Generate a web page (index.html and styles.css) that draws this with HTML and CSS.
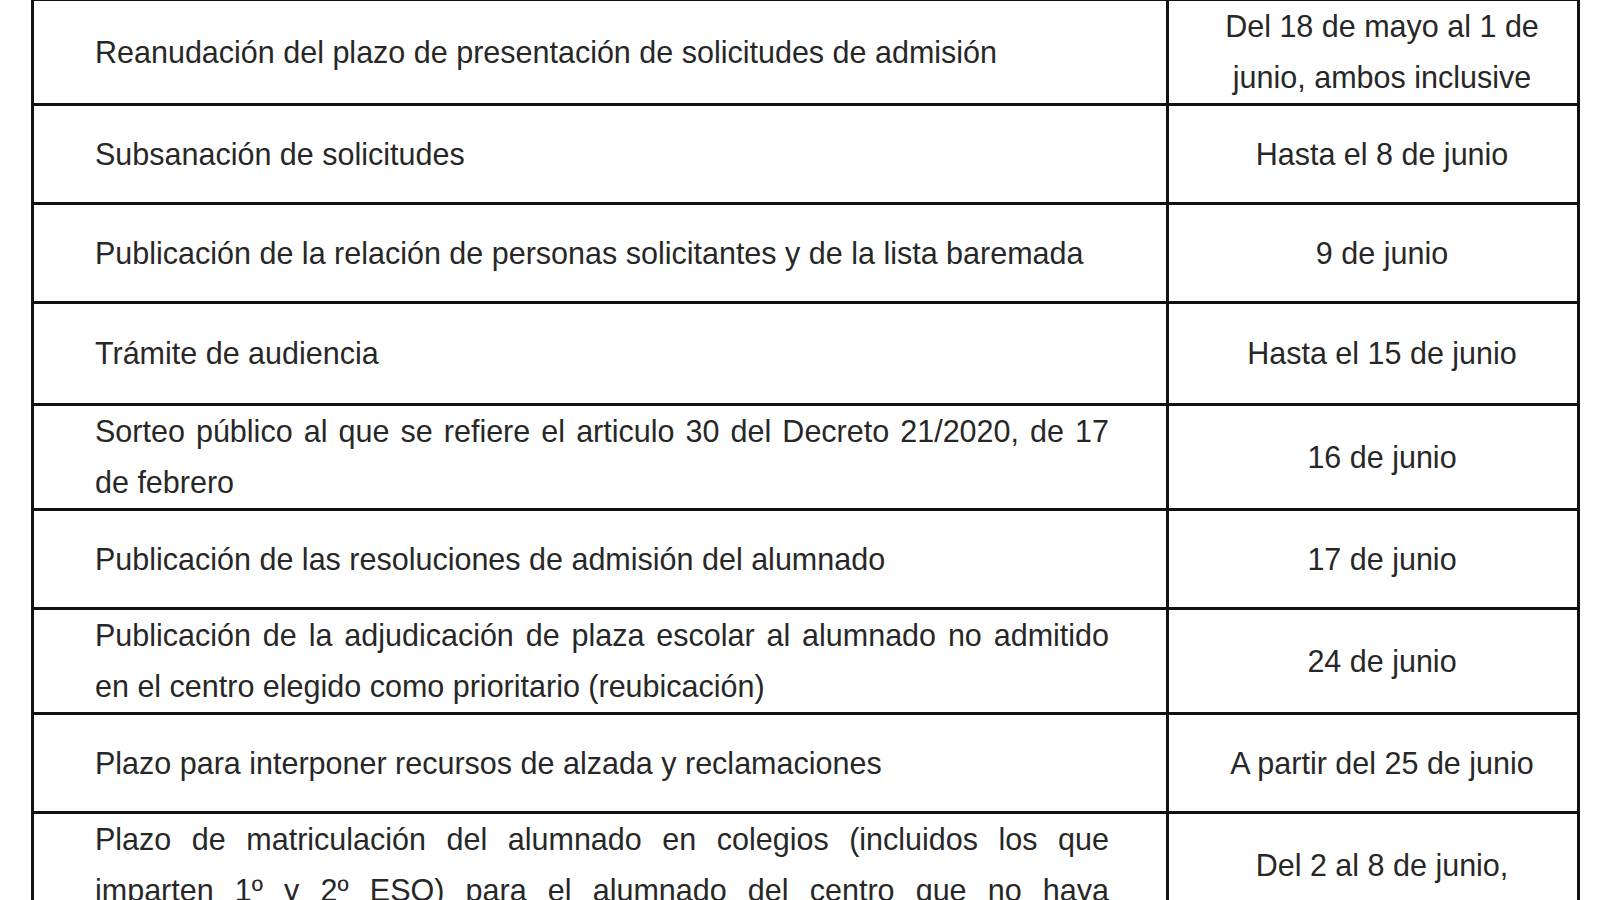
FILE: index.html
```html
<!DOCTYPE html>
<html lang="es">
<head>
<meta charset="utf-8">
<title>Calendario de admisión</title>
<link rel="stylesheet" href="styles.css">
</head>
<body>
<table class="calendar">
  <colgroup>
    <col class="col-task">
    <col class="col-date">
  </colgroup>
  <tbody>
    <tr>
      <td class="task">Reanudación del plazo de presentación de solicitudes de admisión</td>
      <td class="date">Del 18 de mayo al 1 de<br>junio, ambos inclusive</td>
    </tr>
    <tr>
      <td class="task">Subsanación de solicitudes</td>
      <td class="date">Hasta el 8 de junio</td>
    </tr>
    <tr>
      <td class="task">Publicación de la relación de personas solicitantes y de la lista baremada</td>
      <td class="date">9 de junio</td>
    </tr>
    <tr class="row-tall">
      <td class="task">Trámite de audiencia</td>
      <td class="date">Hasta el 15 de junio</td>
    </tr>
    <tr>
      <td class="task"><span class="jline">Sorteo público al que se refiere el articulo 30 del Decreto 21/2020, de 17</span><span class="line">de febrero</span></td>
      <td class="date">16 de junio</td>
    </tr>
    <tr>
      <td class="task">Publicación de las resoluciones de admisión del alumnado</td>
      <td class="date">17 de junio</td>
    </tr>
    <tr>
      <td class="task"><span class="jline">Publicación de la adjudicación de plaza escolar al alumnado no admitido</span><span class="line">en el centro elegido como prioritario (reubicación)</span></td>
      <td class="date">24 de junio</td>
    </tr>
    <tr>
      <td class="task">Plazo para interponer recursos de alzada y reclamaciones</td>
      <td class="date">A partir del 25 de junio</td>
    </tr>
    <tr>
      <td class="task"><span class="jline">Plazo de matriculación del alumnado en colegios (incluidos los que</span><span class="jline">imparten 1º y 2º ESO) para el alumnado del centro que no haya</span><span class="line">participado en el procedimiento de admisión</span></td>
      <td class="date">Del 2 al 8 de junio,<br>ambos inclusive</td>
    </tr>
  </tbody>
</table>
</body>
</html>
```
FILE: styles.css
```css
html, body {
  margin: 0;
  padding: 0;
  background: #ffffff;
}

body {
  font-family: "Liberation Sans", Arial, sans-serif;
  color: #272727;
  overflow: hidden;
}

.calendar {
  border-collapse: collapse;
  table-layout: fixed;
  width: 1546px;
  margin: -2px 0 0 31px;
}

.col-task {
  width: 1135px;
}

.col-date {
  width: 411px;
}

.calendar td {
  border: 3px solid #111111;
  height: 96px;
  padding: 0;
  vertical-align: middle;
  font-size: 30.5px;
  line-height: 51px;
}

.calendar .row-tall td {
  height: 99px;
}

.task {
  padding: 0 57px 0 61px !important;
  text-align: left;
}

.date {
  padding: 0 8px 0 26px !important;
  text-align: center;
}

.jline {
  display: block;
  text-align: justify;
  text-align-last: justify;
}

.line {
  display: block;
}
```
